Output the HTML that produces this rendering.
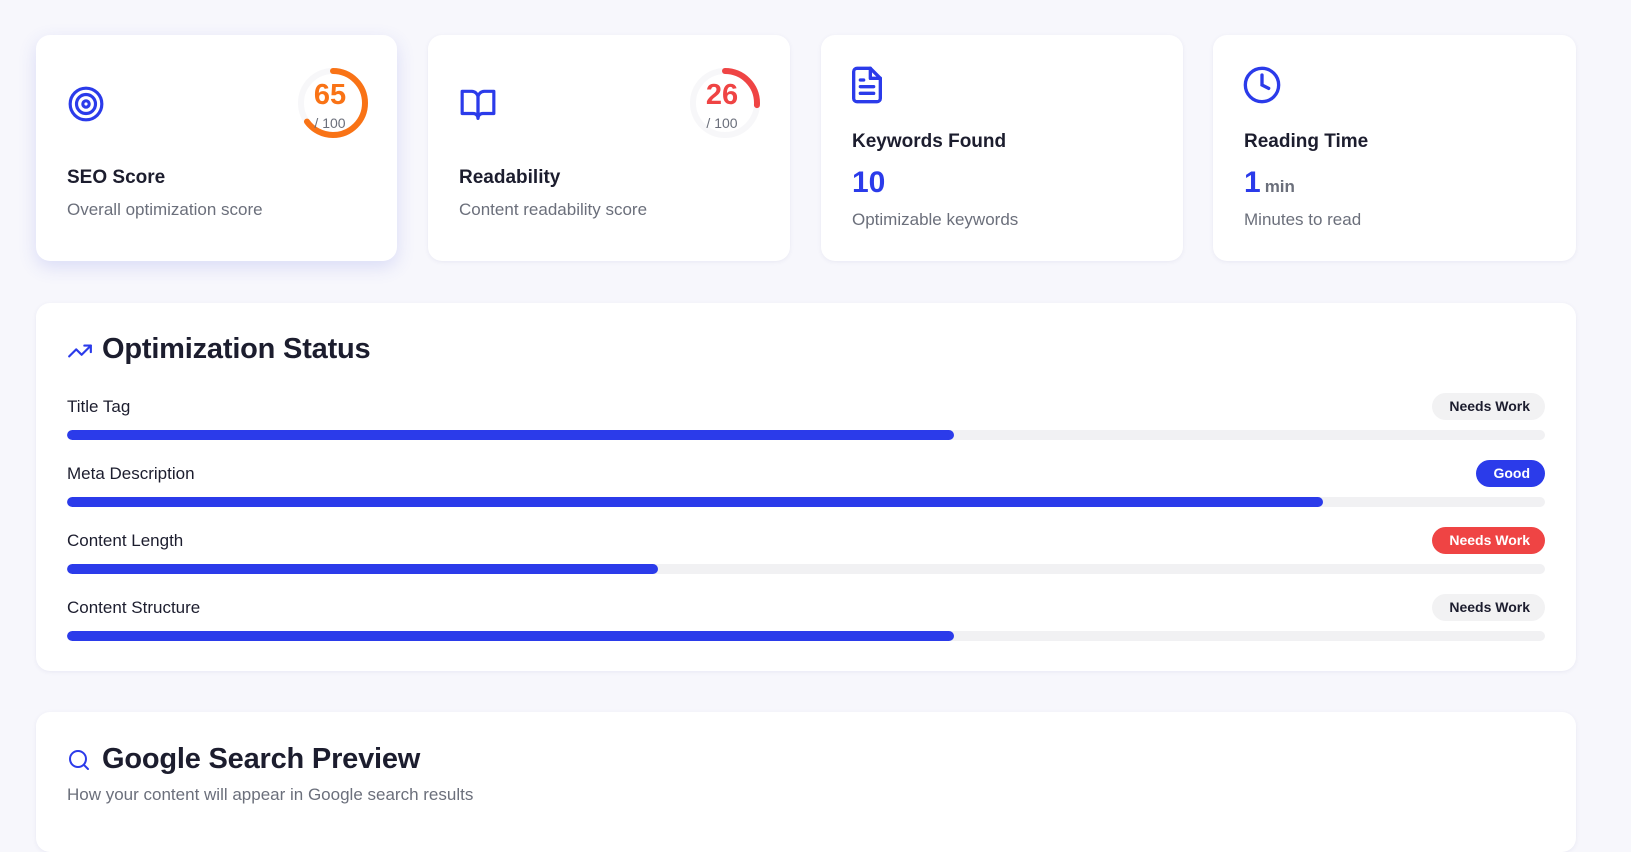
<!DOCTYPE html>
<html><head><meta charset="utf-8"><style>
*{box-sizing:border-box;margin:0;padding:0}
body{width:1631px;height:833px;overflow:hidden;background:#f7f7fc;font-family:"Liberation Sans",sans-serif;color:#1c1d2e;position:relative}
.card{position:absolute;background:#fff;border-radius:14px;box-shadow:0 1px 4px rgba(60,60,140,.08)}
.c1{box-shadow:0 6px 18px rgba(70,80,220,.16)}
.st{position:absolute;left:31px;font-size:19px;font-weight:600}
.sd{position:absolute;left:31px;font-size:17px;color:#6b6f7b}
.gauge{position:absolute;top:32px;width:72px;height:72px}
.gn{position:absolute;left:0;width:66px;text-align:center;font-size:29px;font-weight:700;top:44px}
.gd{position:absolute;left:0;width:66px;text-align:center;font-size:14px;color:#6b6f7b;top:80px}
.panel{position:absolute;left:36px;width:1540px;background:#fff;border-radius:14px;box-shadow:0 1px 4px rgba(60,60,140,.08)}
.h{position:absolute;left:66px;font-size:29px;font-weight:600;letter-spacing:-0.2px}
.lab{position:absolute;left:31px;font-size:17px}
.bar{position:absolute;left:31px;width:1478px;height:10px;border-radius:5px;background:#f1f1f3;overflow:hidden}
.bar i{display:block;height:100%;background:#2b3bea;border-radius:5px}
.bd{position:absolute;right:31px;height:27px;line-height:27px;border-radius:14px;padding:0 15px 0 17px;font-size:14px;font-weight:700;background:#f2f2f3;color:#1c1d2e}
</style></head><body>

<div class="card c1" style="left:36px;top:35px;width:361px;height:226px">
 <svg style="position:absolute;left:31px;top:50px" width="38" height="38" viewBox="0 0 24 24" fill="none" stroke="#2b3bea" stroke-width="2"><circle cx="12" cy="12" r="10"/><circle cx="12" cy="12" r="6"/><circle cx="12" cy="12" r="2"/></svg>
 <div class="gauge" style="left:261px">
  <svg width="72" height="72" viewBox="0 0 72 72"><circle cx="36" cy="36" r="32" fill="none" stroke="#f7f7f9" stroke-width="6"/><circle cx="36" cy="36" r="32" fill="none" stroke="#f97316" stroke-width="6" stroke-linecap="round" stroke-dasharray="130.7 201" transform="rotate(-90 36 36)"/></svg>
 </div>
 <div class="gn" style="left:261px;color:#f97316">65</div>
 <div class="gd" style="left:261px">/ 100</div>
 <div class="st" style="top:132px">SEO Score</div>
 <div class="sd" style="top:165px">Overall optimization score</div>
</div>

<div class="card" style="left:428px;top:35px;width:362px;height:226px">
 <svg style="position:absolute;left:31px;top:50px" width="38" height="38" viewBox="0 0 24 24" fill="none" stroke="#2b3bea" stroke-width="2" stroke-linejoin="round"><path d="M2 4h6a4 4 0 0 1 4 4v13a3 3 0 0 0-3-3H2z"/><path d="M22 4h-6a4 4 0 0 0-4 4v13a3 3 0 0 1 3-3h7z"/></svg>
 <div class="gauge" style="left:261px">
  <svg width="72" height="72" viewBox="0 0 72 72"><circle cx="36" cy="36" r="32" fill="none" stroke="#f7f7f9" stroke-width="6"/><circle cx="36" cy="36" r="32" fill="none" stroke="#ef4444" stroke-width="6" stroke-linecap="round" stroke-dasharray="52.3 201" transform="rotate(-90 36 36)"/></svg>
 </div>
 <div class="gn" style="left:261px;color:#ef4444">26</div>
 <div class="gd" style="left:261px">/ 100</div>
 <div class="st" style="top:132px">Readability</div>
 <div class="sd" style="top:165px">Content readability score</div>
</div>

<div class="card" style="left:821px;top:35px;width:362px;height:226px">
 <svg style="position:absolute;left:26px;top:30px" width="40" height="40" viewBox="0 0 24 24" fill="none" stroke="#2b3bea" stroke-width="2" stroke-linejoin="round" stroke-linecap="round"><path d="M14 2H6a2 2 0 0 0-2 2v16a2 2 0 0 0 2 2h12a2 2 0 0 0 2-2V8z"/><path d="M14 2v6h6"/><path d="M16 13H8M16 17H8M10 9H8"/></svg>
 <div class="st" style="top:96px">Keywords Found</div>
 <div style="position:absolute;left:31px;top:131px;font-size:30px;font-weight:700;color:#2b3bea">10</div>
 <div class="sd" style="top:175px">Optimizable keywords</div>
</div>

<div class="card" style="left:1213px;top:35px;width:363px;height:226px">
 <svg style="position:absolute;left:29px;top:30px" width="40" height="40" viewBox="0 0 24 24" fill="none" stroke="#2b3bea" stroke-width="2" stroke-linecap="round"><circle cx="12" cy="12" r="10"/><path d="M12 6v6l4 2"/></svg>
 <div class="st" style="top:96px">Reading Time</div>
 <div style="position:absolute;left:31px;top:131px;font-size:30px;font-weight:700;color:#2b3bea">1<span style="font-size:17px;color:#6b6f7b;margin-left:4px">min</span></div>
 <div class="sd" style="top:175px">Minutes to read</div>
</div>

<div class="panel" style="top:303px;height:368px">
 <svg style="position:absolute;left:31px;top:35px" width="26" height="26" viewBox="0 0 24 24" fill="none" stroke="#2b3bea" stroke-width="2" stroke-linecap="round" stroke-linejoin="round"><path d="M22 7l-8.5 8.5-5-5L2 17"/><path d="M16 7h6v6"/></svg>
 <div class="h" style="top:30px">Optimization Status</div>
 <div class="lab" style="top:94px">Title Tag</div><div class="bd" style="top:90px">Needs Work</div>
 <div class="bar" style="top:127px"><i style="width:60%"></i></div>
 <div class="lab" style="top:161px">Meta Description</div><div class="bd" style="top:157px;background:#2b3bea;color:#fff">Good</div>
 <div class="bar" style="top:194px"><i style="width:85%"></i></div>
 <div class="lab" style="top:228px">Content Length</div><div class="bd" style="top:224px;background:#ef4444;color:#fff">Needs Work</div>
 <div class="bar" style="top:261px"><i style="width:40%"></i></div>
 <div class="lab" style="top:295px">Content Structure</div><div class="bd" style="top:291px">Needs Work</div>
 <div class="bar" style="top:328px"><i style="width:60%"></i></div>
</div>

<div class="panel" style="top:712px;height:140px">
 <svg style="position:absolute;left:31px;top:36px" width="24" height="24" viewBox="0 0 24 24" fill="none" stroke="#2b3bea" stroke-width="2" stroke-linecap="round"><circle cx="11" cy="11" r="8"/><path d="M21 21l-4.3-4.3"/></svg>
 <div class="h" style="top:31px">Google Search Preview</div>
 <div class="lab" style="top:73px;color:#6b6f7b">How your content will appear in Google search results</div>
</div>
</body></html>
